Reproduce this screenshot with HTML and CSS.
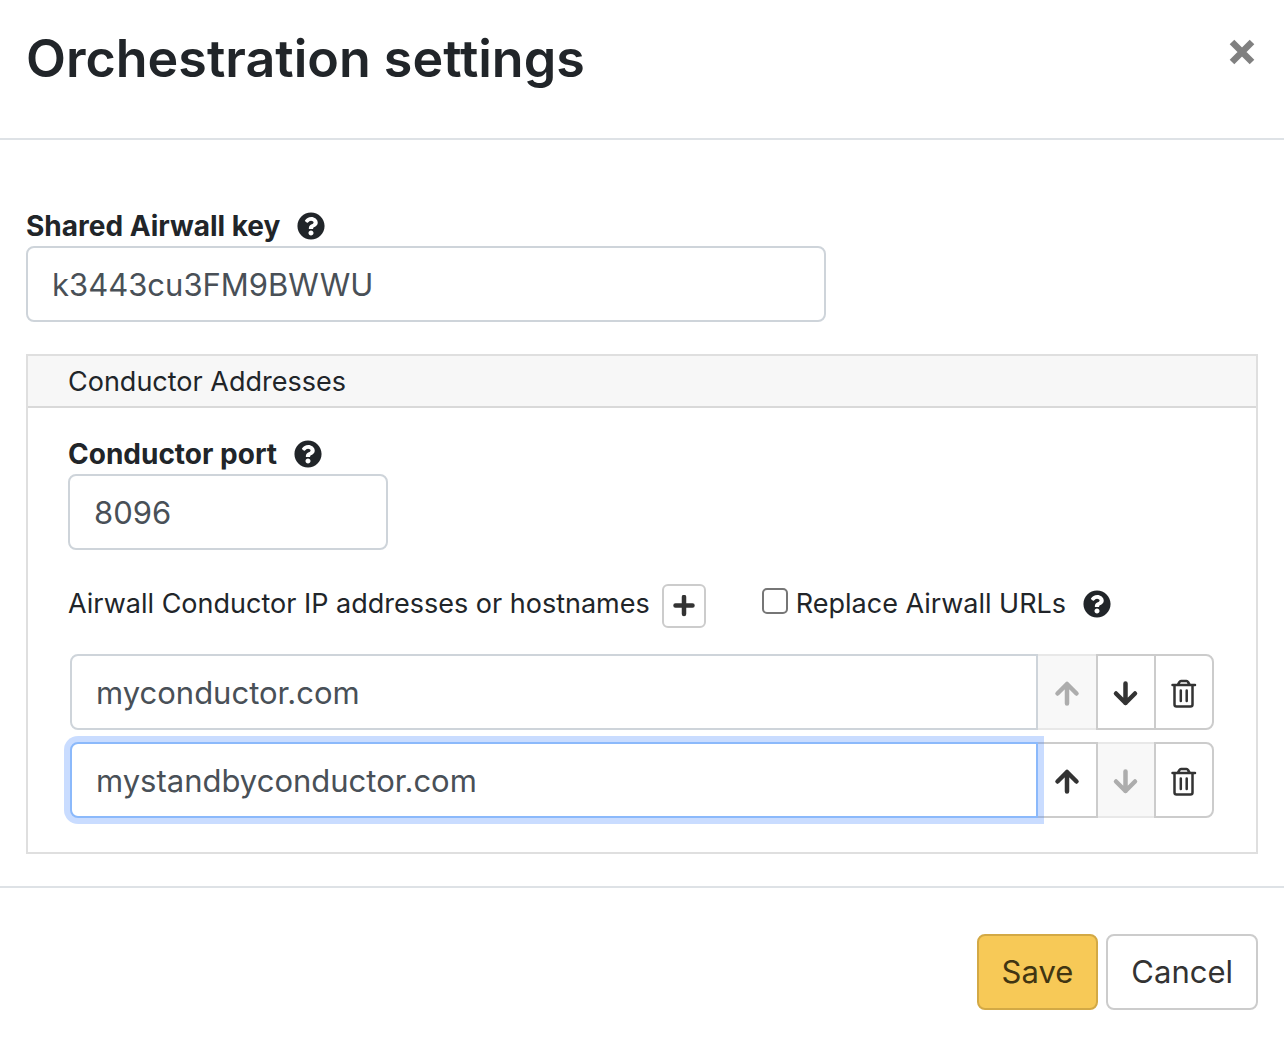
FILE: index.html
```html
<!DOCTYPE html>
<html lang="en">
<head>
<meta charset="utf-8">
<meta name="viewport" content="width=device-width, initial-scale=1">
<title>Orchestration settings</title>
<link rel="stylesheet" href="styles.css">
</head>
<body>
<svg class="sprite" aria-hidden="true">
  <symbol id="help" viewBox="0 0 512 512"><path d="M504 256c0 136.997-111.043 248-248 248S8 392.997 8 256C8 119.083 119.043 8 256 8s248 111.083 248 248zM262.655 90c-54.497 0-89.255 22.957-116.549 63.758-3.536 5.286-2.353 12.415 2.715 16.258l34.699 26.31c5.205 3.947 12.621 3.008 16.665-2.122 17.864-22.658 30.113-35.797 57.303-35.797 20.429 0 45.698 13.148 45.698 32.958 0 14.976-12.363 22.667-32.534 33.976C247.128 238.528 216 254.941 216 296v4c0 6.627 5.373 12 12 12h56c6.627 0 12-5.373 12-12v-1.333c0-28.462 83.186-29.647 83.186-106.667 0-58.002-60.165-102-116.531-102zM256 338c-25.365 0-46 20.635-46 46 0 25.364 20.635 46 46 46s46-20.636 46-46c0-25.365-20.635-46-46-46z"/></symbol>
  <symbol id="arrow-up" viewBox="0 0 28 32"><path d="M14 27.500V8M4.500 17.500L14 8l9.500 9.500" fill="none" stroke="currentColor" stroke-width="4.500" stroke-linecap="round" stroke-linejoin="round"/></symbol>
  <symbol id="arrow-down" viewBox="0 0 28 32"><path d="M13.500 7.500V27M4 17.500l9.500 9.500 9.500-9.500" fill="none" stroke="currentColor" stroke-width="4.500" stroke-linecap="round" stroke-linejoin="round"/></symbol>
  <symbol id="trash" viewBox="0 0 28 32"><g fill="none" stroke="currentColor" stroke-width="2.500" stroke-linecap="round" stroke-linejoin="round"><path d="M2.500 9h22.500M4.500 9v19.500q0 2 2 2h14q2 0 2-2V9M8 8.500l1.500-2.500q.5-1 1.500-1h5.500q1 0 1.500 1l1.500 2.500M10.800 14.500v10.500M16.700 14.500v10.500"/></g></symbol>
</svg>
<form class="dialog">
  <header class="dialog-header">
    <h1 class="title">Orchestration settings</h1>
    <button class="close" type="button" aria-label="Close"><svg class="close-icon" viewBox="0 0 26 26"><path d="M3 3l20 20M23 3L3 23" stroke="currentColor" stroke-width="6.500"/></svg></button>
  </header>
  <main class="dialog-body">
    <div class="label-row">
      <label class="label" for="key">Shared Airwall key</label>
      <svg class="help"><use href="#help"/></svg>
    </div>
    <input class="field field-key" id="key" type="text" value="k3443cu3FM9BWWU">
    <section class="card">
      <h2 class="card-header">Conductor Addresses</h2>
      <div class="card-body">
        <div class="label-row">
          <label class="label" for="port">Conductor port</label>
          <svg class="help"><use href="#help"/></svg>
        </div>
        <input class="field field-port" id="port" type="text" value="8096">
        <div class="toolbar">
          <span>Airwall Conductor IP addresses or hostnames</span>
          <button class="add" type="button" aria-label="Add address"><svg class="add-icon" viewBox="0 0 22 22"><path d="M11 2v17M2.500 10.500h17" stroke="currentColor" stroke-width="4.500" stroke-linecap="round"/></svg></button>
          <div class="replace">
            <input class="check" id="replace" type="checkbox">
            <label for="replace">Replace Airwall URLs</label>
            <svg class="help"><use href="#help"/></svg>
          </div>
        </div>
        <div class="addresses">
          <div class="group">
            <input class="field group-field" type="text" value="myconductor.com" aria-label="Address 1">
            <button class="group-button first" type="button" aria-label="Move up" disabled><svg class="glyph"><use href="#arrow-up"/></svg></button>
            <button class="group-button" type="button" aria-label="Move down"><svg class="glyph"><use href="#arrow-down"/></svg></button>
            <button class="group-button last" type="button" aria-label="Delete"><svg class="glyph"><use href="#trash"/></svg></button>
          </div>
          <div class="group">
            <input class="field group-field focused" type="text" value="mystandbyconductor.com" aria-label="Address 2">
            <button class="group-button first" type="button" aria-label="Move up"><svg class="glyph"><use href="#arrow-up"/></svg></button>
            <button class="group-button" type="button" aria-label="Move down" disabled><svg class="glyph"><use href="#arrow-down"/></svg></button>
            <button class="group-button last" type="button" aria-label="Delete"><svg class="glyph"><use href="#trash"/></svg></button>
          </div>
        </div>
      </div>
    </section>
  </main>
  <footer class="dialog-footer">
    <button class="button primary" type="submit">Save</button>
    <button class="button" type="button">Cancel</button>
  </footer>
</form>
</body>
</html>
```
FILE: styles.css
```css
* { box-sizing: border-box; }
body {
  margin: 0;
  background: #fff;
  color: #212529;
  font-family: Inter, "Liberation Sans", sans-serif;
  font-size: 27px;
  line-height: 40px;
}
button, input { font: inherit; color: inherit; margin: 0; }
button { padding: 0; background: #fff; cursor: pointer; }
svg { display: block; flex: none; }
.sprite { display: none; }

.dialog-header {
  display: flex;
  justify-content: space-between;
  align-items: flex-start;
  padding: 26px 26px 46px;
  border-bottom: 2px solid #dee2e6;
}
.title { margin: 0; font-size: 52px; line-height: 66px; font-weight: 600; }
.close { margin-top: 10px; padding: 3px; border: 0; color: #808080; }
.close-icon { width: 26px; height: 26px; }

.dialog-body { padding: 66px 26px 32px; }
.label-row { display: flex; align-items: center; gap: 17px; }
.label { font-size: 28px; font-weight: 700; }
.help { width: 28px; height: 28px; fill: currentColor; }

.field {
  display: block;
  height: 76px;
  padding: 0 24px;
  border: 2px solid #ced4da;
  border-radius: 8px;
  background: #fff;
  color: #495057;
  font-size: 31px;
  outline: 0;
}
.field-key { width: 100%; max-width: 800px; }
.field-port { width: 320px; }

.card { margin-top: 32px; border: 2px solid #dfdfdf; }
.card-header {
  margin: 0;
  padding: 6px 40px 4px;
  border-bottom: 2px solid #d9d9d9;
  background: #f7f7f7;
  font-size: 27px;
  font-weight: 400;
}
.card-body { padding: 26px 42px 34px 40px; }

.toolbar { display: flex; align-items: flex-start; gap: 12px; margin: 34px 0 26px; }
.add {
  display: grid;
  place-items: center;
  width: 44px;
  height: 44px;
  border: 2px solid #ccc;
  border-radius: 6px;
  color: #333;
}
.add-icon { width: 22px; height: 22px; }
.replace { display: flex; align-items: center; gap: 8px; margin-left: 44px; }
.replace .help { margin-left: 9px; }
.check {
  appearance: none;
  width: 26px;
  height: 26px;
  margin-bottom: 6px;
  border: 2px solid #767676;
  border-radius: 5px;
}
.check:checked { background: #3b82f6; }

.addresses { display: grid; gap: 12px; margin-left: 2px; }
.group { display: flex; }
.group-field { flex: 1; min-width: 0; border-radius: 8px 0 0 8px; }
.focused {
  position: relative;
  z-index: 1;
  border-color: #8bb9fb;
  box-shadow: 0 0 0 6px rgba(75, 139, 255, 0.3);
}
.group-button {
  display: grid;
  place-items: center;
  width: 60px;
  height: 76px;
  margin-left: -2px;
  border: 2px solid #ccc;
  color: #333;
}
.group-button:not(:disabled) { position: relative; }
.group-button:disabled { border-color: #e8e8e8; background: #f8f8f8; color: #adadad; }
.group-button.first { margin-left: 0; border-left: 0; }
.group-button.last { border-radius: 0 8px 8px 0; }
.glyph { width: 28px; height: 32px; }

.dialog-footer {
  display: flex;
  justify-content: flex-end;
  gap: 8px;
  padding: 46px 26px 28px;
  border-top: 2px solid #dee2e6;
}
.button {
  height: 76px;
  padding: 0 23px;
  border: 2px solid #ccc;
  border-radius: 8px;
  color: #333;
  font-size: 31px;
}
.primary { border-color: #d3a945; background: #f7c957; color: #413512; }
```
